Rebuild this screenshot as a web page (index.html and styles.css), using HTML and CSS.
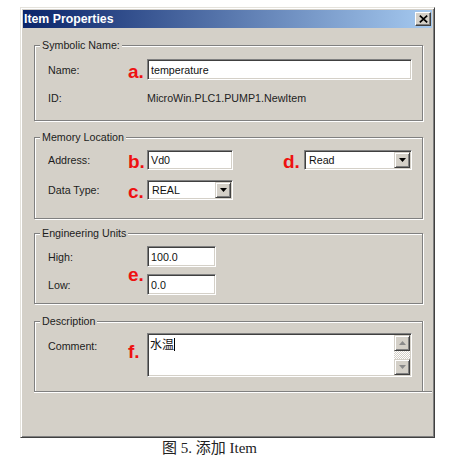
FILE: index.html
```html
<!DOCTYPE html>
<html>
<head>
<meta charset="utf-8">
<title>Item Properties</title>
<link rel="stylesheet" href="styles.css">
</head>
<body>
<div class="dialog">
  <div class="titlebar">
    <span class="title">Item Properties</span>
    <span class="close"><svg width="9" height="8" viewBox="0 0 9 8"><path d="M0.8 0.6 L8.2 7.4 M8.2 0.6 L0.8 7.4" stroke="#000" stroke-width="1.7" fill="none"/></svg></span>
  </div>
  <div class="body">
    <div class="group g1">
      <div class="legend">Symbolic Name:</div>
      <div class="rows">
        <div class="lbl">Name:</div>
        <div class="mark">a.</div>
        <div class="field">temperature</div>
        <div class="lbl">ID:</div>
        <div></div>
        <div class="value">MicroWin.PLC1.PUMP1.NewItem</div>
      </div>
    </div>
    <div class="group g2">
      <div class="legend">Memory Location</div>
      <div class="rows">
        <div class="lbl">Address:</div>
        <div class="mark">b.</div>
        <div class="cell">
          <div class="field w-addr">Vd0</div>
          <div class="mark dmark">d.</div>
          <div class="combo grow"><span class="ctext">Read</span><span class="dd"><svg width="7" height="4" viewBox="0 0 7 4"><path d="M0 0 H7 L3.5 4 Z" fill="#000"/></svg></span></div>
        </div>
        <div class="lbl">Data Type:</div>
        <div class="mark">c.</div>
        <div class="cell">
          <div class="combo w-addr"><span class="ctext">REAL</span><span class="dd"><svg width="7" height="4" viewBox="0 0 7 4"><path d="M0 0 H7 L3.5 4 Z" fill="#000"/></svg></span></div>
        </div>
      </div>
    </div>
    <div class="group g3">
      <div class="legend">Engineering Units</div>
      <div class="rows">
        <div class="lbl">High:</div>
        <div class="mark emark">e.</div>
        <div class="cell"><div class="field w-eng">100.0</div></div>
        <div class="lbl">Low:</div>
        <div class="cell"><div class="field w-eng">0.0</div></div>
      </div>
    </div>
    <div class="group g4">
      <div class="legend">Description</div>
      <div class="rows">
        <div class="lbl lbl-top">Comment:</div>
        <div class="mark fmark">f.</div>
        <div class="textarea">
          <div class="ta-text">水温<span class="caret"></span></div>
          <div class="sb">
            <span class="sbtn"><svg width="7" height="4" viewBox="0 0 7 4"><path d="M0 4 H7 L3.5 0 Z" fill="#8a8a8a"/></svg></span>
            <span class="track"></span>
            <span class="sbtn"><svg width="7" height="4" viewBox="0 0 7 4"><path d="M0 0 H7 L3.5 4 Z" fill="#8a8a8a"/></svg></span>
          </div>
        </div>
      </div>
    </div>
    <div class="sep"></div>
  </div>
</div>
<div class="caption">图 5. 添加 Item</div>
</body>
</html>
```
FILE: styles.css
```css
* { box-sizing: border-box; }
body {
  margin: 0;
  background: #fff;
  font-family: "Liberation Sans", Arial, sans-serif;
  font-size: 10.7px;
  color: #1c1c1c;
}
.dialog {
  margin: 7px 0 0 20px;
  width: 415px;
  height: 431px;
  background: #d4d0c8;
  border: 1px solid;
  border-color: #e4e2dc #404040 #404040 #e4e2dc;
  box-shadow: inset 1px 1px #fff, inset -1px -1px #808080;
  padding: 2px;
  display: flex;
  flex-direction: column;
}
.titlebar {
  height: 18px;
  flex: none;
  background: linear-gradient(to right, #0a246a, #a6caf0);
  display: flex;
  align-items: center;
  justify-content: space-between;
  padding: 0 1px 0 1px;
}
.title {
  color: #fff;
  font-weight: bold;
  font-size: 12.3px;
}
.close {
  width: 16px;
  height: 14px;
  background: #d4d0c8;
  border: 1px solid;
  border-color: #fff #404040 #404040 #fff;
  box-shadow: inset -1px -1px #808080;
  display: flex;
  align-items: center;
  justify-content: center;
}
.body {
  padding: 17px 9px 0 11px;
}
.group {
  border: 1px solid #808080;
  box-shadow: inset 1px 1px #fff, 1px 1px #fff;
}
.legend {
  margin: -7px 0 0 5px;
  padding: 0 2px;
  background: #d4d0c8;
  width: max-content;
  height: 13px;
  line-height: 13px;
}
.rows {
  display: grid;
  grid-template-columns: 80px 19px 1fr;
  padding: 0 10px 0 13px;
  align-items: center;
}
.g1 .rows { grid-template-rows: 21px 21px; row-gap: 7px; margin-top: 7px; padding-bottom: 12px; }
.g2 { margin-top: 16px; }
.g2 .rows { grid-template-rows: 20px 20px; row-gap: 10px; margin-top: 6px; padding-bottom: 18px; }
.g3 { margin-top: 14px; }
.g3 .rows { grid-template-rows: 21px 21px; row-gap: 7px; margin-top: 6px; padding-bottom: 8px; }
.g4 { margin-top: 17px; border-bottom: none; box-shadow: inset 1px 1px #fff, 1px 0 #fff; }
.g4 .rows { grid-template-rows: 44px; margin-top: 5px; padding-bottom: 14px; }

.mark {
  color: #ee1111;
  font-weight: bold;
  font-size: 19px;
  line-height: 19px;
  align-self: end;
  margin-bottom: -1px;
}
.emark { grid-row: 1 / 3; grid-column: 2; align-self: center; margin-top: 6px; }
.fmark { align-self: start; margin-top: 9px; }
.lbl-top { align-self: start; margin-top: 7px; }
.cell { display: flex; align-items: center; height: 100%; }
.field {
  height: 100%;
  background: #fff;
  border: 1px solid;
  border-color: #808080 #fff #fff #808080;
  box-shadow: inset 1px 1px #404040, inset -1px -1px #d4d0c8;
  padding: 0 3px;
  display: flex;
  align-items: center;
  color: #111;
}
.value { color: #222; }
.w-addr { width: 86px; flex: none; }
.w-eng { width: 69px; flex: none; }
.dmark { margin-left: 50px; width: 21px; flex: none; align-self: end; }
.grow { flex: 1; }
.combo {
  height: 100%;
  background: #fff;
  border: 1px solid;
  border-color: #808080 #fff #fff #808080;
  box-shadow: inset 1px 1px #404040, inset -1px -1px #d4d0c8;
  padding: 1px;
  display: flex;
  align-items: stretch;
}
.ctext {
  flex: 1;
  display: flex;
  align-items: center;
  padding-left: 3px;
  color: #111;
}
.dd, .sbtn {
  width: 16px;
  flex: none;
  background: #d4d0c8;
  border: 1px solid;
  border-color: #d4d0c8 #404040 #404040 #d4d0c8;
  box-shadow: inset 1px 1px #fff, inset -1px -1px #808080;
  display: flex;
  align-items: center;
  justify-content: center;
}
.textarea {
  height: 100%;
  background: #fff;
  border: 1px solid;
  border-color: #808080 #fff #fff #808080;
  box-shadow: inset 1px 1px #404040, inset -1px -1px #d4d0c8;
  padding: 1px;
  display: flex;
}
.ta-text {
  flex: 1;
  padding: 2px 0 0 1px;
  font-family: "Noto Sans CJK SC", sans-serif;
  font-size: 12px;
  line-height: 14px;
  color: #111;
}
.caret {
  display: inline-block;
  width: 1px;
  height: 13px;
  background: #000;
  vertical-align: -2px;
}
.sb {
  width: 16px;
  display: flex;
  flex-direction: column;
}
.sbtn { height: 16px; }
.track {
  flex: 1;
  background: repeating-conic-gradient(#fff 0 25%, #d4d0c8 0 50%) 0 0 / 2px 2px;
}
.sep {
  height: 2px;
  border-top: 1px solid #808080;
  border-bottom: 1px solid #fff;
  margin-right: -9px;
}
.caption {
  margin-top: 1px;
  padding-left: 162px;
  font-family: "Liberation Serif", "Noto Sans CJK SC", serif;
  font-size: 15px;
  line-height: 18px;
  color: #222;
}
```
